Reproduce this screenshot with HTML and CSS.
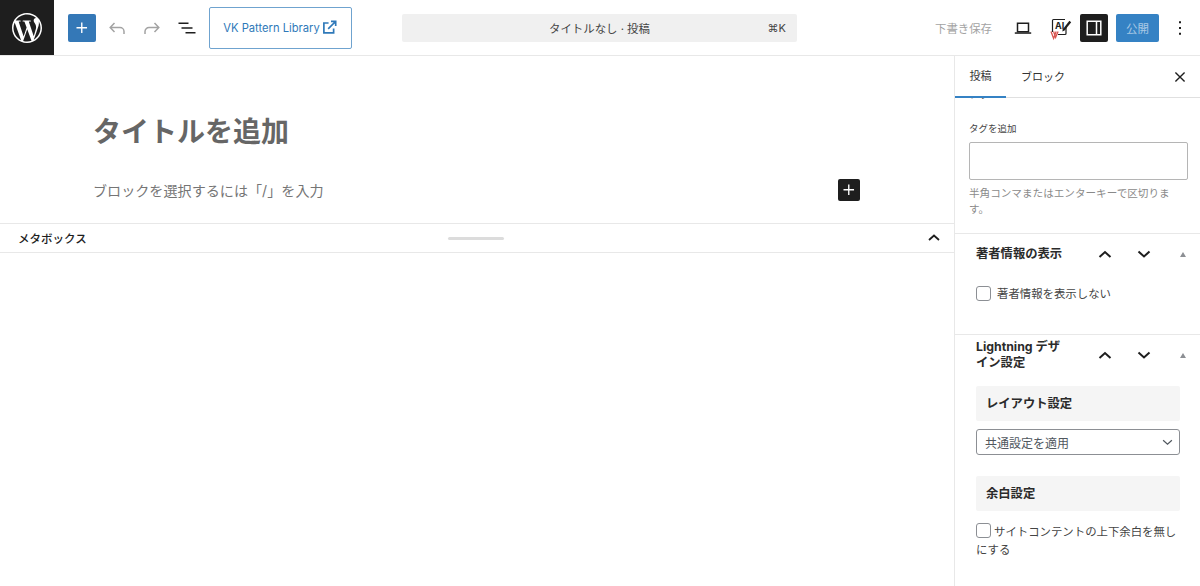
FILE: index.html
```html
<!DOCTYPE html>
<html lang="ja">
<head>
<meta charset="utf-8">
<title>タイトルなし · 投稿</title>
<link rel="stylesheet" href="styles.css">
</head>
<body>
<header class="topbar">
  <div class="logo">
    <svg viewBox="10 10 20 20" width="30" height="30"><path fill="#fff" d="M20 10c-5.51 0-10 4.49-10 10s4.49 10 10 10 10-4.49 10-10-4.49-10-10-10zM11.01 20c0-1.3.28-2.54.78-3.66l4.29 11.75C13.08 26.63 11.01 23.55 11.01 20zM20 28.99c-.88 0-1.73-.13-2.54-.37l2.7-7.84 2.76 7.57c.02.04.04.09.06.13-.93.33-1.93.51-2.98.51zm1.24-13.2c.54-.03 1.03-.09 1.03-.09.48-.06.43-.77-.06-.74 0 0-1.46.11-2.4.11-.88 0-2.37-.11-2.37-.11-.49-.03-.54.71-.06.74 0 0 .46.06.95.09l1.41 3.87-1.98 5.94-3.3-9.81c.55-.03 1.04-.09 1.04-.09.49-.06.43-.77-.06-.74 0 0-1.46.11-2.4.11-.17 0-.37 0-.58-.01C14.07 12.66 16.86 11.01 20 11.01c2.34 0 4.47.89 6.07 2.36-.04 0-.08-.01-.12-.01-.88 0-1.51.77-1.51 1.6 0 .74.43 1.37.88 2.11.34.6.74 1.37.74 2.48 0 .77-.3 1.66-.68 2.91l-.9 3-3.24-9.67zm3.28 11.99l2.74-7.93c.51-1.28.68-2.31.68-3.22 0-.33-.02-.64-.06-.92.7 1.28 1.1 2.75 1.1 4.31 0 3.31-1.8 6.21-4.46 7.76z"/></svg>
  </div>
  <div class="tools">
    <button class="inserter" aria-label="追加">
      <svg viewBox="0 0 24 24" width="22" height="22"><path fill="#fff" d="M11 12.5V17.5H12.5V12.5H17.5V11H12.5V6H11V11H6V12.5H11Z"/></svg>
    </button>
    <span class="tool">
      <svg viewBox="0 0 24 24" width="24" height="24"><path fill="none" stroke="#a3a3a3" stroke-width="1.5" d="M19 18v-2.500a4 4 0 0 0-4-4H5.500M9.500 7l-4.300 4.500 4.300 4.500"/></svg>
    </span>
    <span class="tool">
      <svg viewBox="0 0 24 24" width="24" height="24"><path fill="none" stroke="#a3a3a3" stroke-width="1.5" d="M5 18v-2.500a4 4 0 0 1 4-4h9.500M14.500 7l4.300 4.500-4.300 4.500"/></svg>
    </span>
    <span class="tool">
      <svg viewBox="0 0 24 24" width="24" height="24"><path fill="#1e1e1e" d="M3.500 6.500h10V8h-10zM6.500 11.300h11v1.500h-11zM10.500 16h10v1.500h-10z"/></svg>
    </span>
    <button class="vk">VK Pattern Library<svg viewBox="0 0 16 16" width="15" height="15"><path fill="none" stroke="#2f79b9" stroke-width="1.8" d="M7 3.200H2v10.600h10.400V9M9.600 1.400h5v5M14.400 1.600 6.600 9.400"/></svg></button>
  </div>
  <div class="command">
    <span class="command-title">タイトルなし · 投稿</span>
    <span class="command-key">⌘K</span>
  </div>
  <div class="actions">
    <span class="save">下書き保存</span>
    <span class="tool laptop">
      <svg viewBox="0 0 24 24" width="24" height="24"><path fill="none" stroke="#1e1e1e" stroke-width="1.5" d="M6.500 7.200h11v8.600h-11z"/><path fill="#1e1e1e" d="M3.800 16.300h16.400v1.500H3.800z"/></svg>
    </span>
    <span class="tool ai">
      <svg viewBox="0 0 24 24" width="24" height="24">
        <path fill="none" stroke="#1e1e1e" stroke-width="1.2" d="M17 3.500H5.500a1 1 0 0 0-1 1V16M10 18.500h7a1 1 0 0 0 1-1V11"/>
        <text class="ai-label" x="7" y="12.500">AI</text>
        <path fill="#1e1e1e" d="M14.800 13.200l6.600-8.400 1.800 1.400-6.600 8.400-2.300.9z"/>
        <path fill="none" stroke="#d9534f" stroke-width="1.300" d="M3 15.500l2.600 7 2.600-7M5.600 15.500l2 6 2.500-6"/>
      </svg>
    </span>
    <button class="panel-toggle" aria-label="設定">
      <svg viewBox="0 0 24 24" width="24" height="24"><path fill="none" stroke="#fff" stroke-width="1.5" d="M5.200 5.200h13.600v13.600H5.200zM14.500 5.200v13.600"/></svg>
    </button>
    <button class="publish">公開</button>
    <span class="tool more">
      <svg viewBox="0 0 24 24" width="24" height="24"><path fill="#1e1e1e" d="M11 5.200h2v2h-2zM11 11h2v2h-2zM11 16.800h2v2h-2z"/></svg>
    </span>
  </div>
</header>

<div class="workspace">
  <main class="editor">
    <div class="canvas">
      <h1 class="post-title">タイトルを追加</h1>
      <div class="block-row">
        <p class="placeholder">ブロックを選択するには「/」を入力</p>
        <button class="block-add" aria-label="追加">
          <svg viewBox="0 0 24 24" width="22" height="22"><path fill="#fff" d="M11 12.500V17.500H12.500V12.500H17.500V11H12.500V6H11V11H6V12.500H11Z"/></svg>
        </button>
      </div>
    </div>
    <div class="metabox">
      <span class="metabox-title">メタボックス</span>
      <span class="handle"></span>
      <svg class="meta-chevron" viewBox="0 0 24 24" width="24" height="24"><path fill="none" stroke="#1e1e1e" stroke-width="1.800" d="M7 14l5-4.500 5 4.500"/></svg>
    </div>
  </main>

  <aside class="sidebar">
    <div class="tabs">
      <span class="tab active">投稿</span>
      <span class="tab">ブロック</span>
      <svg class="close" viewBox="0 0 24 24" width="22" height="22"><path fill="none" stroke="#1e1e1e" stroke-width="1.500" d="M7 7l10 10M17 7 7 17"/></svg>
    </div>
    <div class="side-scroll">
      <div class="tag-panel">
        <p class="tag-heading">タグ</p>
        <label class="tag-label">タグを追加</label>
        <div class="tag-input"></div>
        <p class="tag-help">半角コンマまたはエンターキーで区切ります。</p>
      </div>
      <section class="box box-author">
        <div class="box-head">
          <h2 class="box-title">著者情報の表示</h2>
          <svg class="chev" viewBox="0 0 24 24" width="24" height="24"><path fill="none" stroke="#1e1e1e" stroke-width="2" d="M6.500 15l5.500-5 5.500 5"/></svg>
          <svg class="chev" viewBox="0 0 24 24" width="24" height="24"><path fill="none" stroke="#1e1e1e" stroke-width="2" d="M6.500 9.500l5.500 5 5.500-5"/></svg>
          <span class="tri"></span>
        </div>
        <div class="check-row">
          <span class="check"></span>
          <span class="check-text">著者情報を表示しない</span>
        </div>
      </section>
      <section class="box box-design">
        <div class="box-head">
          <h2 class="box-title">Lightning デザイン設定</h2>
          <svg class="chev" viewBox="0 0 24 24" width="24" height="24"><path fill="none" stroke="#1e1e1e" stroke-width="2" d="M6.500 15l5.500-5 5.500 5"/></svg>
          <svg class="chev" viewBox="0 0 24 24" width="24" height="24"><path fill="none" stroke="#1e1e1e" stroke-width="2" d="M6.500 9.500l5.500 5 5.500-5"/></svg>
          <span class="tri"></span>
        </div>
        <h3 class="sub-title">レイアウト設定</h3>
        <div class="select">
          <span>共通設定を適用</span>
          <svg viewBox="0 0 12 8" width="11" height="7"><path fill="none" stroke="#50575e" stroke-width="1.400" d="M1 1.500l5 4.500 5-4.500"/></svg>
        </div>
        <h3 class="sub-title sub-second">余白設定</h3>
        <p class="check-para"><span class="check check-inline"></span>サイトコンテントの上下余白を無しにする</p>
      </section>
    </div>
  </aside>
</div>
</body>
</html>
```

FILE: styles.css
```css
* { box-sizing: border-box; }
html, body { height: 100%; }
body {
  margin: 0;
  height: 586px;
  overflow: hidden;
  background: #fff;
  color: #1e1e1e;
  font-family: Inter, "Noto Sans CJK JP", sans-serif;
  font-size: 13px;
  display: flex;
  flex-direction: column;
}
button { font: inherit; border: 0; padding: 0; cursor: pointer; }
h1, h2, h3, p { margin: 0; }

.topbar {
  height: 56px;
  flex: none;
  display: flex;
  align-items: center;
  border-bottom: 1px solid #e8e8e8;
}
.logo {
  width: 54px;
  height: 55px;
  background: #1e1e1e;
  display: flex;
  align-items: center;
  justify-content: center;
  flex: none;
}
.tools {
  display: flex;
  align-items: center;
  margin-left: 14px;
  width: 334px;
  flex: none;
}
.inserter {
  width: 28px;
  height: 28px;
  background: #3478b7;
  border-radius: 2px;
  display: flex;
  align-items: center;
  justify-content: center;
}
.tool {
  width: 24px;
  height: 24px;
  flex: none;
  display: block;
}
.tool svg { display: block; overflow: visible; }
.tools .tool { margin-left: 11px; }
.tools .tool:first-of-type { margin-left: 9px; }
.vk {
  margin-left: 10px;
  width: 143px;
  height: 42px;
  background: #fff;
  border: 1px solid #6fa3cf;
  border-radius: 2px;
  color: #2f79b9;
  font-size: 11.2px;
  display: flex;
  align-items: center;
  justify-content: center;
  gap: 2px;
  padding-right: 1px;
}
.command {
  width: 395px;
  height: 28px;
  background: #f0f0f0;
  border-radius: 2px;
  flex: none;
  display: flex;
  align-items: center;
  justify-content: center;
  position: relative;
  font-size: 11.4px;
  color: #444;
}
.command-key {
  position: absolute;
  right: 11px;
  font-size: 11px;
}
.actions {
  flex: 1;
  display: flex;
  align-items: center;
  padding-left: 138px;
}
.save { font-size: 11.4px; color: #a3a3a3; width: 57px; white-space: nowrap; }
.laptop { margin-left: 19px; }
.ai { margin-left: 13px; }
.ai-label { font-size: 9px; font-weight: 700; fill: #1e1e1e; }
.panel-toggle {
  width: 28px;
  height: 28px;
  margin-left: 8px;
  background: #1e1e1e;
  border-radius: 2px;
  display: flex;
  align-items: center;
  justify-content: center;
}
.publish {
  width: 43px;
  height: 28px;
  margin-left: 8px;
  background: #3582c4;
  color: #a9c9e4;
  border-radius: 2px;
  font-size: 11.5px;
}
.more { margin-left: 9px; }

.workspace {
  flex: 1;
  min-height: 0;
  display: flex;
}
.editor {
  width: 954px;
  flex: none;
  display: flex;
  flex-direction: column;
}
.canvas {
  height: 167px;
  padding: 57px 94px 0 93px;
  flex: none;
}
.post-title {
  font-size: 28px;
  line-height: 38px;
  font-weight: 700;
  color: #666;
}
.block-row {
  margin-top: 28px;
  height: 22px;
  display: flex;
  align-items: center;
  justify-content: space-between;
}
.placeholder { font-size: 14.1px; color: #757575; }
.block-add {
  width: 22px;
  height: 22px;
  background: #1e1e1e;
  border-radius: 2px;
  display: flex;
  align-items: center;
  justify-content: center;
}
.metabox {
  height: 30px;
  border-top: 1px solid #e8e8e8;
  border-bottom: 1px solid #e8e8e8;
  display: flex;
  align-items: center;
  padding: 0 8px 0 18px;
  position: relative;
}
.metabox-title { font-size: 11.5px; font-weight: 500; }
.handle {
  position: absolute;
  left: 448px;
  top: 13px;
  width: 56px;
  height: 3px;
  border-radius: 2px;
  background: #dcdcdc;
}
.meta-chevron { margin-left: auto; }

.sidebar {
  flex: 1;
  min-width: 0;
  border-left: 1px solid #e8e8e8;
  display: flex;
  flex-direction: column;
}
.tabs {
  height: 42px;
  flex: none;
  display: flex;
  border-bottom: 1px solid #e0e0e0;
  align-items: stretch;
  position: relative;
}
.tab {
  font-size: 11px;
  display: flex;
  align-items: center;
  justify-content: center;
  padding-bottom: 2px;
  color: #333;
}
.tab.active { width: 51px; border-bottom: 2px solid #3582c4; margin-bottom: -1px; }
.tab:nth-child(2) { margin-left: 15px; }
.close { margin: auto 9px auto auto; }
.side-scroll { flex: 1; min-height: 0; overflow: hidden; }
.tag-panel {
  display: flow-root;
  padding: 0 12px 0 14px;
  height: 136px;
  border-bottom: 1px solid #e8e8e8;
}
.tag-heading {
  margin-top: -12px;
  height: 16px;
  font-size: 11px;
  line-height: 16px;
  color: #444;
}
.tag-label { display: block; margin-top: 20px; font-size: 9.5px; line-height: 14px; color: #444; }
.tag-input {
  margin-top: 6px;
  width: 219px;
  height: 38px;
  border: 1px solid #b5b5b5;
  border-radius: 2px;
}
.tag-help {
  margin-top: 6px;
  font-size: 10.6px;
  line-height: 16px;
  color: #8a8a8a;
  width: 212px;
}
.box { padding: 0 19px 0 21px; }
.box-author { height: 101px; border-bottom: 1px solid #e8e8e8; }
.box-head {
  display: flex;
  align-items: center;
  height: 40px;
}
.box-title {
  font-size: 12.3px;
  line-height: 16px;
  font-weight: 700;
  width: 88px;
  margin-right: 25px;
  color: #2b2b2b;
  flex: none;
}
.chev { margin-left: 4px; flex: none; }
.chev + .chev { margin-left: 15px; }
.tri {
  margin-left: 24px;
  width: 0;
  height: 0;
  border-left: 3.5px solid transparent;
  border-right: 3.5px solid transparent;
  border-bottom: 5px solid #8c8f94;
  flex: none;
}
.check-row {
  display: flex;
  align-items: center;
  margin-top: 11px;
  height: 16px;
}
.check {
  display: inline-block;
  width: 15px;
  height: 15px;
  border: 1px solid #8c8f94;
  border-radius: 3px;
  background: #fff;
  flex: none;
}
.check-text { margin-left: 6px; font-size: 11.4px; color: #444; }
.box-design { padding-top: 3px; }
.box-design .box-head { height: 34px; }
.sub-title {
  margin-top: 14px;
  width: 204px;
  height: 35px;
  background: #f5f5f5;
  border-radius: 2px;
  padding-left: 10px;
  font-size: 12.3px;
  font-weight: 700;
  line-height: 35px;
  color: #2b2b2b;
}
.sub-second { margin-top: 21px; }
.select {
  margin-top: 8px;
  width: 204px;
  height: 26px;
  border: 1px solid #8c8f94;
  border-radius: 3px;
  display: flex;
  align-items: center;
  justify-content: space-between;
  padding: 0 6px 0 8px;
  font-size: 12px;
  color: #50575e;
}
.check-para {
  margin-top: 12px;
  width: 204px;
  font-size: 11.4px;
  line-height: 18px;
  color: #444;
}
.check-inline { margin-right: 3px; vertical-align: -2px; }
```
